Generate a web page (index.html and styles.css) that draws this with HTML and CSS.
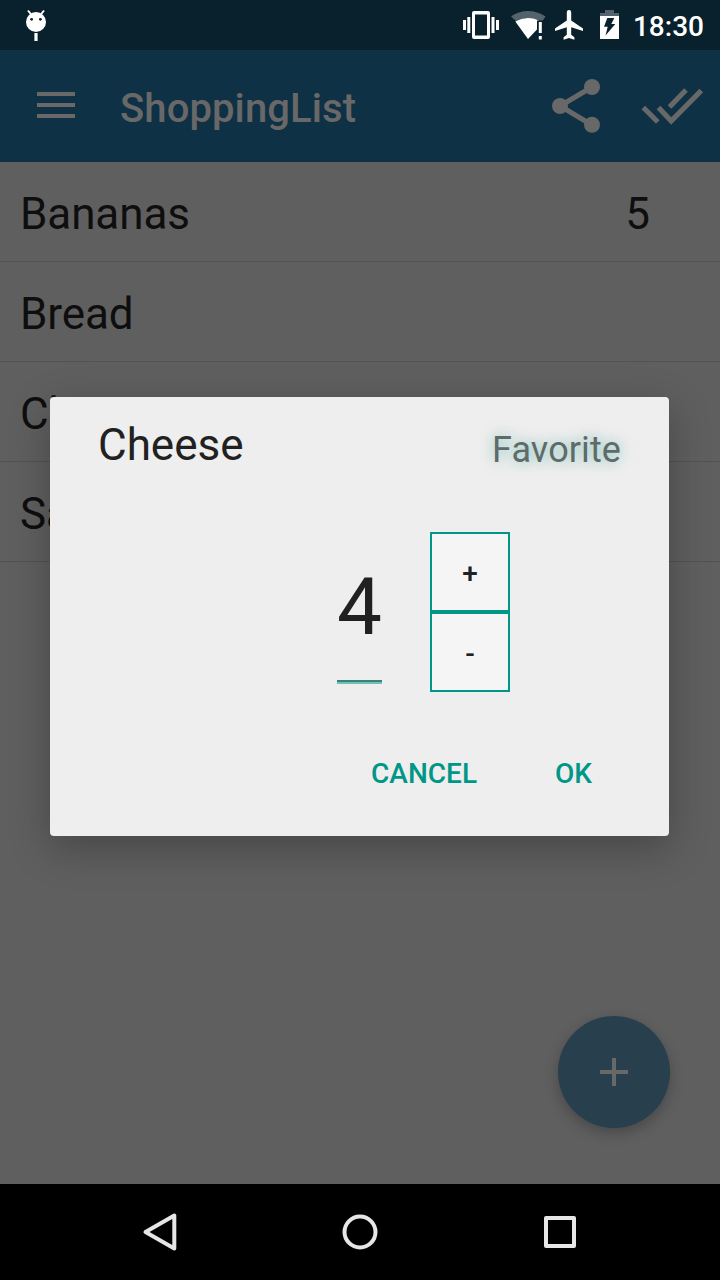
FILE: index.html
```html
<!DOCTYPE html>
<html lang="en">
<head>
<meta charset="utf-8">
<title>ShoppingList</title>
<link rel="stylesheet" href="styles.css">
</head>
<body>
<div class="screen">
  <header class="status-bar">
    <svg class="debug-icon" width="24" height="34" viewBox="0 0 24 34">
      <circle cx="12" cy="15" r="10" fill="#fff"/>
      <path d="M4 3.500l3.200 4M20 3.500l-3.200 4" stroke="#fff" stroke-width="2"/>
      <path d="M12 26v8" stroke="#fff" stroke-width="3.200"/>
      <circle cx="7.600" cy="12.300" r="1.400" fill="#09202d"/><circle cx="16.400" cy="12.300" r="1.400" fill="#09202d"/>
    </svg>
    <div class="status-icons">
      <svg width="36" height="30" viewBox="0 0 36 30" fill="#fff">
        <path fill-rule="evenodd" d="M11 1h14a2 2 0 0 1 2 2v24a2 2 0 0 1-2 2H11a2 2 0 0 1-2-2V3a2 2 0 0 1 2-2zM12 4.500v21h12v-21z"/>
        <path d="M0 10h3v10H0zM4.300 7h3v16h-3zM28.500 7h3v16h-3zM33 10h3v10h-3z"/>
      </svg>
      <svg class="wifi" width="35" height="30" viewBox="0 0 35 30">
        <path d="M0 6.500Q7.500 1 17 1T34.500 6.500L31.500 11H5z" fill="#53636c"/>
        <path d="M4.300 11.500Q10.500 8 17 8t11.300 3v6l-11.300 12z" fill="#fff"/>
        <path d="M26 10.500h6V30h-6z" fill="#09202d"/>
        <path d="M27.800 12h3v11h-3zM27.800 26h3v3.500h-3z" fill="#fff"/>
      </svg>
      <svg class="plane" width="28" height="30" viewBox="0 0 28 30">
        <path fill="#fff" d="M28 21v-2.600L16.200 10.500V2.200a2.200 2.200 0 0 0-4.400 0v8.300L0 18.400V21l11.800-3.800v7.500L8.600 27.300v2.400L14 28l5.400 1.700v-2.400l-3.200-2.600v-7.500z"/>
      </svg>
      <svg class="battery" width="19" height="30" viewBox="0 0 19 30">
        <path fill="#53636c" d="M5 0h9v3h5v3H0V3h5z"/>
        <path fill="#fff" d="M0 6h19v23H0z"/>
        <path fill="#09202d" d="M7.300 8h7l-3 6h4L5.500 25.500l2.200-8.700H4z"/>
      </svg>
      <span class="clock">18:30</span>
    </div>
  </header>
  <nav class="app-bar">
    <svg class="menu-icon" width="38" height="26" viewBox="0 0 38 26"><path d="M0 2h38M0 13h38M0 24h38" stroke="#686868" stroke-width="4"/></svg>
    <h1 class="app-title">ShoppingList</h1>
    <svg class="share-icon" width="48" height="54" viewBox="0 0 48 54" fill="#686868" stroke="#686868">
      <path d="M40 8L8 27l32 19" fill="none" stroke-width="5"/>
      <g stroke="none"><circle cx="8" cy="27" r="8"/><circle cx="40" cy="8" r="8"/><circle cx="40" cy="45.800" r="8"/></g>
    </svg>
    <svg class="done-icon" width="62" height="38" viewBox="0 0 62 38"><path d="M2.300 20.500L16.800 35M17.500 20.500L30.200 34 60.300 3.500M28.500 20L45 3" fill="none" stroke="#686868" stroke-width="5.200"/></svg>
  </nav>
  <main class="content">
    <ul class="list">
      <li class="row"><span>Bananas</span><span>5</span></li>
      <li class="row"><span>Bread</span></li>
      <li class="row"><span>Ch</span></li>
      <li class="row"><span>Sa</span></li>
    </ul>
    <button class="fab" aria-label="Add"><svg width="28" height="28" viewBox="0 0 28 28"><path d="M0 14h28M14 0v28" stroke="#686868" stroke-width="4"/></svg></button>
  </main>
  <footer class="nav-bar">
    <svg width="40" height="40" viewBox="0 0 40 40"><path d="M34.300 3.500v33L5.500 20z"/></svg>
    <svg width="40" height="40" viewBox="0 0 40 40"><circle cx="20" cy="20" r="15.500"/></svg>
    <svg width="40" height="40" viewBox="0 0 40 40"><path d="M6 6h28v28H6z"/></svg>
  </footer>
  <section class="dialog" role="dialog">
    <div class="dialog-head"><h2 class="dialog-title">Cheese</h2><span class="favorite">Favorite</span></div>
    <div class="quantity">
      <div class="amount">4</div>
      <div class="stepper"><button class="step">+</button><button class="step">-</button></div>
    </div>
    <div class="actions"><button class="action">CANCEL</button><button class="action">OK</button></div>
  </section>
</div>
</body>
</html>
```
FILE: styles.css
```css
* { box-sizing: border-box; }
body { margin: 0; font-family: Roboto, "Liberation Sans", sans-serif; }
h1, h2, ul { margin: 0; padding: 0; }
button { border: 0; padding: 0; background: none; font-family: inherit; }
svg { display: block; flex: none; }
.screen { position: relative; display: flex; flex-direction: column; width: 720px; height: 1280px; background: #5f5f5f; overflow: hidden; }

.status-bar { display: flex; justify-content: space-between; height: 50px; padding: 0 16px 0 24px; background: #09202d; color: #fff; }
.debug-icon { margin-top: 7px; }
.status-icons { display: flex; align-items: center; }
.wifi { margin-left: 12px; }
.plane { margin-left: 9px; }
.battery { margin-left: 17px; }
.clock { margin-left: 14px; padding-top: 2px; font-size: 28px; font-weight: 500; }

.app-bar { display: flex; align-items: center; height: 112px; padding: 0 17px 0 37px; background: #0f3145; }
.menu-icon { margin-bottom: 2px; }
.app-title { flex: 1; margin-left: 45px; padding-top: 4px; color: #686868; font-size: 40px; font-weight: 500; letter-spacing: .1px; }
.done-icon { margin-left: 41px; }

.content { position: relative; flex: 1; }
.list { list-style: none; color: #0e0e0e; font-size: 44px; letter-spacing: -.1px; }
.row { display: flex; justify-content: space-between; height: 100px; padding: 3px 70px 0 20px; border-bottom: 1px solid #535353; line-height: 98px; }
.fab { position: absolute; right: 50px; bottom: 56px; display: flex; align-items: center; justify-content: center; width: 112px; height: 112px; border-radius: 50%; background: #283f4e; box-shadow: 0 5px 14px rgba(0, 0, 0, .25); }

.nav-bar { display: flex; align-items: center; justify-content: space-between; height: 96px; padding: 0 140px; background: #000; }
.nav-bar svg { fill: none; stroke: #e6e6e6; stroke-width: 4; stroke-linejoin: round; }

.dialog { position: absolute; left: 50px; top: 397px; width: 619px; height: 439px; border-radius: 4px; background: #eee; box-shadow: 0 12px 40px rgba(0, 0, 0, .27); color: #212121; }
.dialog-head { display: flex; justify-content: space-between; height: 135px; padding: 0 48px; }
.dialog-title { font-size: 44px; font-weight: 400; line-height: 96px; }
.favorite { color: #5f6b69; font-size: 36px; line-height: 106px; letter-spacing: .1px; text-shadow: 0 0 13px rgba(0, 150, 136, .5); }
.quantity { display: flex; gap: 48px; height: 160px; padding-left: 287px; }
.amount { align-self: flex-start; height: 152px; border-bottom: 2px solid #76bdb5; box-shadow: inset 0 -2px #34867d; font-size: 80px; line-height: 150px; }
.stepper { display: grid; grid-template-rows: 80px 80px; width: 80px; }
.step { padding-top: 4px; border: 2px solid #009688; background: #f5f5f5; color: #212121; font-size: 28px; font-weight: 500; line-height: 72px; }
.actions { display: flex; justify-content: flex-end; gap: 78px; padding: 64px 77px 0 0; }
.action { color: #009688; font-size: 28px; font-weight: 500; line-height: 36px; }
```
